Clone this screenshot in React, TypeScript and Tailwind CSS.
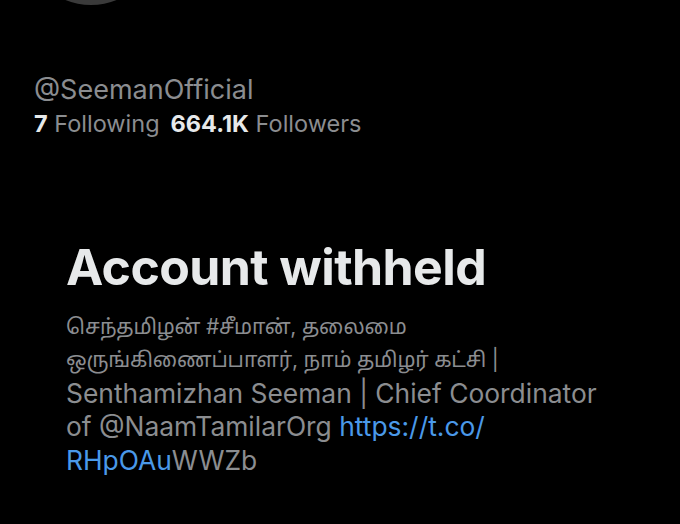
import React from "react";

export default function App() {
  const font = { fontFamily: 'Inter, "Noto Sans", "Noto Sans Tamil", "Liberation Sans", sans-serif' };
  return (
    <div className="w-[680px] h-[524px] bg-black overflow-hidden" style={font}>
      <div className="h-[5px] overflow-hidden pl-[23px]">
        <div className="w-[136px] h-[136px] rounded-full bg-[#3a3a3a] mt-[-131px]" />
      </div>
      <div className="pl-[34px] pt-[69px]">
        <div className="text-[27px] leading-[32px] text-[#8b8d90]">@SeemanOfficial</div>
        <div className="text-[23.5px] leading-[32px] text-[#8b8d90] mt-[1.5px]">
          <span className="font-bold text-[#e7e9ea]">7</span> Following
          <span className="ml-[11px] font-bold text-[#e7e9ea]">664.1K</span> Followers
        </div>
      </div>
      <div className="pl-[66px] pt-[99px]">
        <div className="text-[50px] leading-[56px] font-bold text-[#e7e9ea] tracking-[-0.6px]">Account withheld</div>
        <div className="text-[26.4px] leading-[33.5px] text-[#8b8d90] mt-[15px]">
          <div className="text-[21px] tracking-[-0.2px]">செந்தமிழன் #சீமான், தலைமை</div>
          <div className="text-[21px] tracking-[-0.2px]">ஒருங்கிணைப்பாளர், நாம் தமிழர் கட்சி |</div>
          <div>Senthamizhan Seeman | Chief Coordinator</div>
          <div>
            of @NaamTamilarOrg <span className="text-[#4a99e9]">https://t.co/</span>
          </div>
          <div>
            <span className="text-[#4a99e9]">RHpOAu</span>WWZb
          </div>
        </div>
      </div>
    </div>
  );
}
